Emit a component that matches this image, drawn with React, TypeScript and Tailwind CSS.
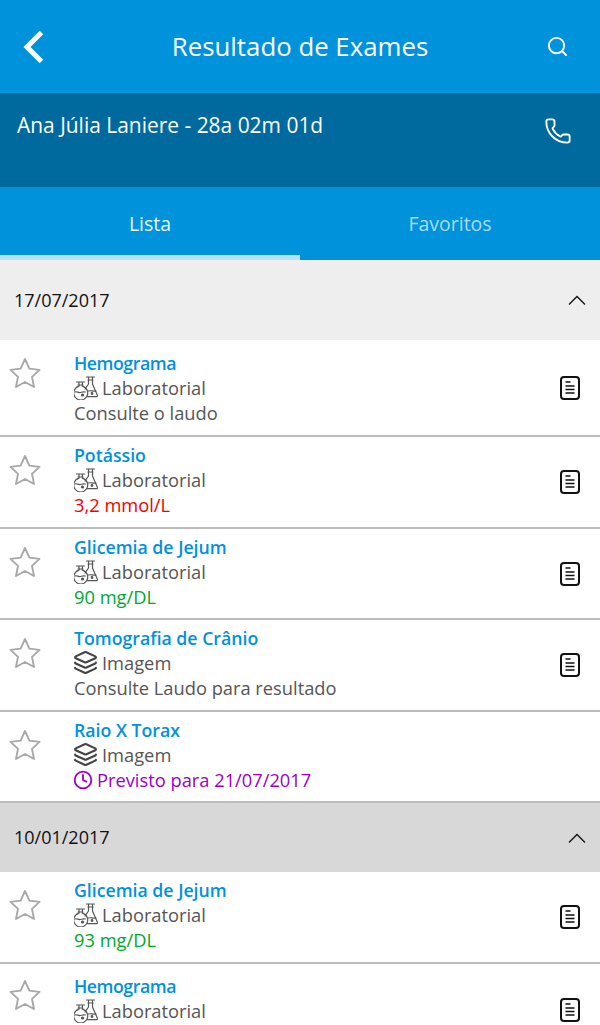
import { Clock, Layers, Phone, Search } from "lucide-react"

type Exam = {
    name: string
    kind: "lab" | "img"
    result: string
    color: string
    pending?: boolean
    doc?: boolean
    nameFix?: string
    top: string
    bottom: string
    starTop: string
    docTop: string
}

const FIRST: Exam[] = [
    { name: "Hemograma", kind: "lab", result: "Consulte o laudo", color: "text-[#555555]", doc: true, nameFix: "tracking-[-0.45px]", top: "pt-[10px]", bottom: "pb-[10px]", starTop: "mt-[17px]", docTop: "mt-[36px]" },
    { name: "Potássio", kind: "lab", result: "3,2 mmol/L", color: "text-[#f00000]", doc: true, top: "pt-[5px]", bottom: "pb-[10px]", starTop: "mt-[17px]", docTop: "mt-[33px]" },
    { name: "Glicemia de Jejum", kind: "lab", result: "90 mg/DL", color: "text-[#00a82d]", doc: true, top: "pt-[5px]", bottom: "pb-[9px]", starTop: "mt-[17px]", docTop: "mt-[33px]" },
    { name: "Tomografia de Crânio", kind: "img", result: "Consulte Laudo para resultado", color: "text-[#555555]", doc: true, top: "pt-[5px]", bottom: "pb-[10px]", starTop: "mt-[17px]", docTop: "mt-[33px]" },
    { name: "Raio X Torax", kind: "img", result: "Previsto para 21/07/2017", color: "text-[#9b00c8]", pending: true, top: "pt-[5px]", bottom: "pb-[9px]", starTop: "mt-[17px]", docTop: "mt-[33px]" },
]

const SECOND: Exam[] = [
    { name: "Glicemia de Jejum", kind: "lab", result: "93 mg/DL", color: "text-[#00a82d]", doc: true, top: "pt-[5px]", bottom: "pb-[10px]", starTop: "mt-[17px]", docTop: "mt-[33px]" },
    { name: "Hemograma", kind: "lab", result: "", color: "text-[#555555]", doc: true, nameFix: "tracking-[-0.45px]", top: "pt-[9px]", bottom: "pb-[10px]", starTop: "mt-[15px]", docTop: "mt-[34px]" },
]

function StarIcon() {
    return (
        <svg width="32" height="32" viewBox="0 0 32 32" fill="none" stroke="#a8a8a8" strokeWidth="1.9" strokeLinejoin="round">
            <path d="M16 2 L20.4 11.6 L30.5 12.9 L23 19.9 L25 30 L16 25 L7 30 L9 19.9 L1.5 12.9 L11.6 11.6 Z" />
        </svg>
    )
}

function FlasksIcon() {
    return (
        <svg width="24" height="24" viewBox="0 0 24 24" fill="none" stroke="#555555" strokeWidth="1.2" strokeLinecap="round" strokeLinejoin="round">
            {/* round flask */}
            <path d="M2.5 6h8M4 9h5M5 6v4.2a7 7 0 1 0 3.4 0V6" />
            <path d="M.8 16c2-1 3.5 1 5.5.5s3-1 5-.5" />
            <circle cx="8.5" cy="19" r="1" fill="#555555" />
            {/* cone flask */}
            <path d="M12.5 1h8M14 4h5M14.5 1v7L11 13M18.5 1v7l5 11.5a1 1 0 0 1-1 1.2h-9" />
            <path d="M14.5 15c2-.8 5 .6 7.5 0" />
            <circle cx="18" cy="17.5" r=".8" fill="#555555" />
        </svg>
    )
}

function DocIcon() {
    return (
        <svg width="20" height="24" viewBox="0 0 20 24" fill="none" stroke="#111111">
            <rect x="1" y="1" width="18" height="22" rx="3" strokeWidth="2" />
            <path d="M5.5 6h5M5.5 10h9M5.5 13.5h9M5.5 17h9" strokeWidth="1.7" />
        </svg>
    )
}

function Chevron() {
    return (
        <svg width="18" height="10" viewBox="0 0 18 10" fill="none" stroke="#111111" strokeWidth="1.3">
            <path d="M1 9.5 L9 1.5 L17 9.5" />
        </svg>
    )
}

function Row({ exam }: { exam: Exam }) {
    return (
        <div className="flex items-start border-b-2 border-[#bcbcbc] bg-white pl-[9px] pr-[20px]">
            <div className={`w-[65px] shrink-0 ${exam.starTop}`}>
                <StarIcon />
            </div>
            <div className={`flex-1 text-[18.3px] leading-[25px] ${exam.top} ${exam.bottom}`}>
                <div className={`h-[25px] text-[17.7px] font-semibold leading-[27px] text-[#0091dc] ${exam.nameFix ?? ""}`}>{exam.name}</div>
                <div className="flex items-center gap-[4px] text-[#555555]">
                    {exam.kind === "lab" ? <FlasksIcon /> : <Layers size={25} strokeWidth={2} color="#444444" className="-ml-[1px]" />}
                    <span>{exam.kind === "lab" ? "Laboratorial" : "Imagem"}</span>
                </div>
                <div className={`flex h-[25px] items-center gap-[4px] ${exam.color}`}>
                    {exam.pending && <Clock size={20} strokeWidth={2.2} className="-ml-[1px]" />}
                    <span>{exam.result}</span>
                </div>
            </div>
            {exam.doc && (
                <div className={`shrink-0 ${exam.docTop}`}>
                    <DocIcon />
                </div>
            )}
        </div>
    )
}

export default function App() {
    return (
        <main className="h-[1025px] w-[600px] overflow-hidden bg-white font-['Open_Sans',sans-serif]">
            <header className="flex h-[93px] items-center justify-between bg-[#0092db] pl-[22px] pr-[31px] text-white">
                <div className="w-[32px]">
                    <svg width="22" height="34" viewBox="0 0 22 34" fill="none" stroke="white" strokeWidth="5">
                        <path d="M19.5 2.5 L5 17 L19.5 31.5" />
                    </svg>
                </div>
                <h1 className="text-[25.8px]">Resultado de Exames</h1>
                <div className="flex w-[23px] justify-end">
                    <Search size={23} strokeWidth={2} />
                </div>
            </header>
            <section className="flex h-[94px] justify-between bg-[#006a9f] pl-[17px] pr-[28px] pt-[16px] text-white">
                <span className="text-[20.95px] leading-[32px]">Ana Júlia Laniere - 28a 02m 01d</span>
                <Phone size={28} strokeWidth={1.6} className="mt-[8px]" />
            </section>
            <nav className="flex h-[73px] bg-[#0092db] text-[19.5px]">
                <div className="flex w-1/2 items-center justify-center border-b-[5px] border-[#b5e2f5] pt-[5px] text-[#e8f6fc]">Lista</div>
                <div className="flex w-1/2 items-center justify-center text-[#a9dcf4]">Favoritos</div>
            </nav>
            <div className="flex h-[80px] items-center justify-between bg-[#eeeeee] px-[14px] text-[18px] text-[#111111]">
                <span>17/07/2017</span>
                <Chevron />
            </div>
            {FIRST.map((exam) => <Row key={exam.name} exam={exam} />)}
            <div className="flex h-[69px] items-center justify-between bg-[#d8d8d8] px-[14px] text-[18px] text-[#111111]">
                <span>10/01/2017</span>
                <Chevron />
            </div>
            {SECOND.map((exam) => <Row key={exam.name} exam={exam} />)}
        </main>
    )
}
